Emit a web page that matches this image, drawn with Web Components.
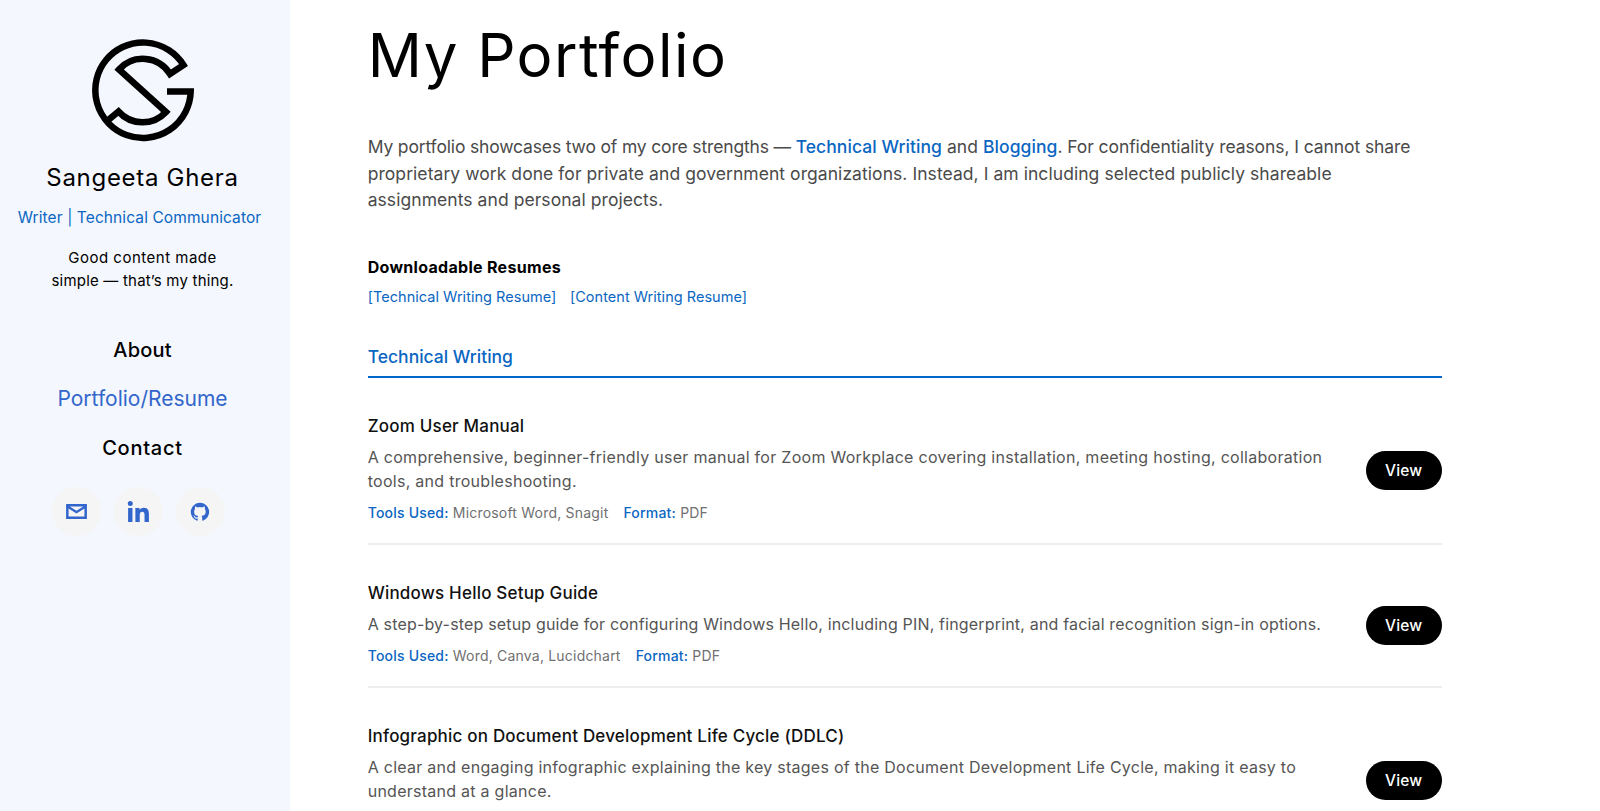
<!DOCTYPE html>
<html>
<head>
<meta charset="utf-8">
<title>My Portfolio</title>
<style>
  html, body { margin: 0; height: 100%; overflow: hidden; background: #fff; }
  body { font-family: Inter, "Open Sans", sans-serif; font-variant-ligatures: none; }
</style>
</head>
<body>
<portfolio-page>
  <site-sidebar slot="side">
    <nav-link>About</nav-link>
    <nav-link active>Portfolio/Resume</nav-link>
    <nav-link style="letter-spacing: 0.75px">Contact</nav-link>
    <social-link slot="social" icon="mail"></social-link>
    <social-link slot="social" icon="linkedin"></social-link>
    <social-link slot="social" icon="github"></social-link>
  </site-sidebar>
  <h1 slot="title">My Portfolio</h1>
  <intro-text slot="intro"><span style="letter-spacing: -0.16px">My portfolio showcases two of my core strengths — </span><b>Technical Writing</b> and <b>Blogging</b><span style="letter-spacing: -0.08px">. For confidentiality reasons, I cannot share</span><br>proprietary work done for private and government organizations. Instead, I am including selected publicly shareable<br>assignments and personal projects.</intro-text>
  <resume-links slot="resumes"></resume-links>
  <section-title>Technical Writing</section-title>
  <project-item style="--desc-spacing: 0.28px" name="Zoom User Manual" tools="Microsoft Word, Snagit" format="PDF">A comprehensive, beginner-friendly user manual for Zoom Workplace covering installation, meeting hosting, collaboration<br>tools, and troubleshooting.</project-item>
  <project-item style="--desc-spacing: 0.17px" name="Windows Hello Setup Guide" tools="Word, Canva, Lucidchart" format="PDF">A step-by-step setup guide for configuring Windows Hello, including PIN, fingerprint, and facial recognition sign-in options.</project-item>
  <project-item style="--desc-spacing: 0.26px" name="Infographic on Document Development Life Cycle (DDLC)">A clear and engaging infographic explaining the key stages of the Document Development Life Cycle, making it easy to<br>understand at a glance.</project-item>
</portfolio-page>
<script>
const BLUE = '#0a66c2';

class PortfolioPage extends HTMLElement {
  constructor() {
    super();
    this.attachShadow({mode: 'open'}).innerHTML = `
      <style>
        :host { display: grid; grid-template-columns: 290px 1fr; height: 100vh; overflow: hidden; }
        main { padding: 0 158.3px 0 77.7px; min-width: 0; }
        ::slotted(h1) { margin: 13px 0 0; font: 400 60px/84px Inter, sans-serif; letter-spacing: 1.45px; color: #000; font-variant-ligatures: none; }
      </style>
      <slot name="side"></slot>
      <main>
        <slot name="title"></slot>
        <slot name="intro"></slot>
        <slot name="resumes"></slot>
        <slot></slot>
      </main>`;
  }
}

class IntroText extends HTMLElement {
  constructor() {
    super();
    this.attachShadow({mode: 'open'}).innerHTML = `
      <style>
        :host { display: block; margin-top: 37px; font-size: 17.5px; line-height: 26.5px; color: #4a4a4a; letter-spacing: 0.06px; }
        ::slotted(b) { font-weight: 500; color: ${BLUE}; }
      </style>
      <slot></slot>`;
  }
}

class SiteSidebar extends HTMLElement {
  constructor() {
    super();
    this.attachShadow({mode: 'open'}).innerHTML = `
      <style>
        :host { display: flex; flex-direction: column; align-items: center; box-sizing: border-box; padding-right: 5px; background: #f4f7fd; height: 100vh; text-align: center; color: #000; }
        svg.logo { display: block; margin-top: 38.5px; }
        .name { margin-top: 17.5px; font-size: 24px; line-height: 36px; letter-spacing: 0.7px; }
        .role { margin: 10px 6px 0 0; font-size: 15.5px; line-height: 24px; letter-spacing: 0.1px; color: ${BLUE}; }
        .tag { margin-top: 17px; font-size: 15px; line-height: 22.5px; letter-spacing: 0.2px; }
        .tag span { letter-spacing: 0.5px; }
        nav { margin-top: 40px; display: flex; flex-direction: column; gap: 13px; align-items: center; }
        .social { margin: 21px 8px 0 0; display: flex; gap: 12.7px; }
      </style>
      <svg class="logo" width="104" height="104" viewBox="0 0 104 104" fill="none" stroke="#000" stroke-width="6.5">
        <path d="M76 52.500H99.700A47.700 47.700 0 1 1 92.500 26L79 35A32 32 0 0 0 28 30.500L75 73A32 32 0 0 1 27.500 72.500L15.500 82.500"/>
      </svg>
      <div class="name">Sangeeta Ghera</div>
      <div class="role">Writer | Technical Communicator</div>
      <div class="tag"><span>Good content made</span><br>simple — that’s my thing.</div>
      <nav><slot></slot></nav>
      <div class="social"><slot name="social"></slot></div>`;
  }
}

class NavLink extends HTMLElement {
  constructor() {
    super();
    this.attachShadow({mode: 'open'}).innerHTML = `
      <style>
        :host { display: block; font-size: 20px; font-weight: 500; line-height: 36px; letter-spacing: 0.2px; color: #000; }
        :host([active]) { color: #3366cc; font-weight: 400; font-size: 21px; letter-spacing: 0; }
      </style>
      <slot></slot>`;
  }
}

const ICONS = {
  mail: '<path fill-rule="evenodd" d="M2 4.850h20v14.300H2z M5.500 7.200h13L12 11.300z M4.400 9.200V16.800h15.200V9.200L12 14z"/>',
  linkedin: '<path d="M2 8.700h4.200V22H2z M4.100 2a2.400 2.400 0 1 1 0 4.800 2.400 2.400 0 0 1 0-4.800z M9 8.700h4v1.800C13.700 9.300 15.200 8.400 17 8.400c3.800 0 5 2.400 5 6V22h-4.200v-6.800c0-1.700-.5-3-2.200-3-1.800 0-2.400 1.400-2.400 3V22H9z"/>',
  github: '<path fill-rule="evenodd" d="M12 2A10 10 0 0 0 8.800 21.500c.5.100.7-.2.7-.5v-1.800c-2.800.6-3.400-1.300-3.400-1.300-.5-1.200-1.100-1.500-1.100-1.500-.9-.6.100-.6.100-.6 1 .1 1.500 1 1.500 1 .9 1.500 2.300 1.100 2.900.8.100-.6.300-1.100.6-1.300-2.200-.3-4.500-1.100-4.500-4.900 0-1.100.4-2 1-2.700-.1-.3-.4-1.300.1-2.700 0 0 .8-.3 2.700 1a9.500 9.500 0 0 1 5 0c1.900-1.300 2.700-1 2.700-1 .5 1.400.2 2.400.1 2.700.6.700 1 1.600 1 2.700 0 3.800-2.300 4.600-4.500 4.900.4.300.7.900.7 1.900V21c0 .3.200.6.700.5A10 10 0 0 0 12 2z"/>',
};

class SocialLink extends HTMLElement {
  constructor() {
    super();
    const icon = this.getAttribute('icon');
    this.attachShadow({mode: 'open'}).innerHTML = `
      <style>
        :host { display: flex; width: 49px; height: 49px; border-radius: 50%; background: #f5f5f5; align-items: center; justify-content: center; }
        svg { width: 25px; height: 25px; fill: #3366cc; }
        :host([icon=github]) svg { width: 22px; height: 22px; }
      </style>
      <svg viewBox="0 0 24 24">${ICONS[icon]}</svg>`;
  }
}

class ResumeLinks extends HTMLElement {
  constructor() {
    super();
    this.attachShadow({mode: 'open'}).innerHTML = `
      <style>
        :host { display: block; margin-top: 41px; }
        .head { font-size: 16px; font-weight: 700; line-height: 24px; color: #000; letter-spacing: 0.3px; }
        .links { margin-top: 7px; display: flex; gap: 13.500px; font-size: 14.500px; line-height: 22px; letter-spacing: 0.03px; color: ${BLUE}; }
      </style>
      <div class="head">Downloadable Resumes</div>
      <div class="links"><span>[Technical Writing Resume]</span><span>[Content Writing Resume]</span></div>`;
  }
}

class SectionTitle extends HTMLElement {
  constructor() {
    super();
    this.attachShadow({mode: 'open'}).innerHTML = `
      <style>
        :host { display: block; margin-top: 35px; padding-bottom: 5px; border-bottom: 2px solid #0066cc; font-size: 17.5px; font-weight: 500; line-height: 28px; color: ${BLUE}; }
      </style>
      <slot></slot>`;
  }
}

class ViewButton extends HTMLElement {
  constructor() {
    super();
    this.attachShadow({mode: 'open'}).innerHTML = `
      <style>
        :host { display: block; flex: none; width: 76px; height: 39px; margin-top: 6px; border-radius: 20px; background: #000; color: #fff; text-align: center; font-size: 15.500px; font-weight: 500; line-height: 39px; letter-spacing: 0.2px; }
      </style>
      <slot></slot>`;
  }
}

class ProjectItem extends HTMLElement {
  constructor() {
    super();
    const name = this.getAttribute('name');
    const tools = this.getAttribute('tools');
    const format = this.getAttribute('format');
    // third row runs off the bottom of the window, its meta line stays empty
    const meta = tools ? `<span><b>Tools Used:</b> ${tools}</span><span><b>Format:</b> ${format}</span>` : '';
    this.attachShadow({mode: 'open'}).innerHTML = `
      <style>
        :host { display: flex; align-items: center; justify-content: space-between; gap: 20px; padding: 35px 0 19.5px; border-bottom: 2px solid #eee; }
        h3 { margin: 0; font-size: 17px; font-weight: 500; line-height: 26px; letter-spacing: 0.2px; color: #111; }
        .desc { margin-top: 6px; font-size: 16px; line-height: 24px; color: #555; letter-spacing: var(--desc-spacing, 0.25px); white-space: nowrap; }
        .meta { margin-top: 9.500px; display: flex; gap: 15px; height: 21px; font-size: 14px; line-height: 21px; letter-spacing: 0.2px; color: #707070; }
        b { font-weight: 500; color: ${BLUE}; }
      </style>
      <div>
        <h3>${name}</h3>
        <div class="desc"><slot></slot></div>
        <div class="meta">${meta}</div>
      </div>
      <view-button>View</view-button>`;
  }
}

// children first, so inner tags upgrade when the parent clones them
customElements.define('view-button', ViewButton);
customElements.define('nav-link', NavLink);
customElements.define('social-link', SocialLink);
customElements.define('intro-text', IntroText);
customElements.define('resume-links', ResumeLinks);
customElements.define('section-title', SectionTitle);
customElements.define('project-item', ProjectItem);
customElements.define('site-sidebar', SiteSidebar);
customElements.define('portfolio-page', PortfolioPage);
</script>
</body>
</html>
